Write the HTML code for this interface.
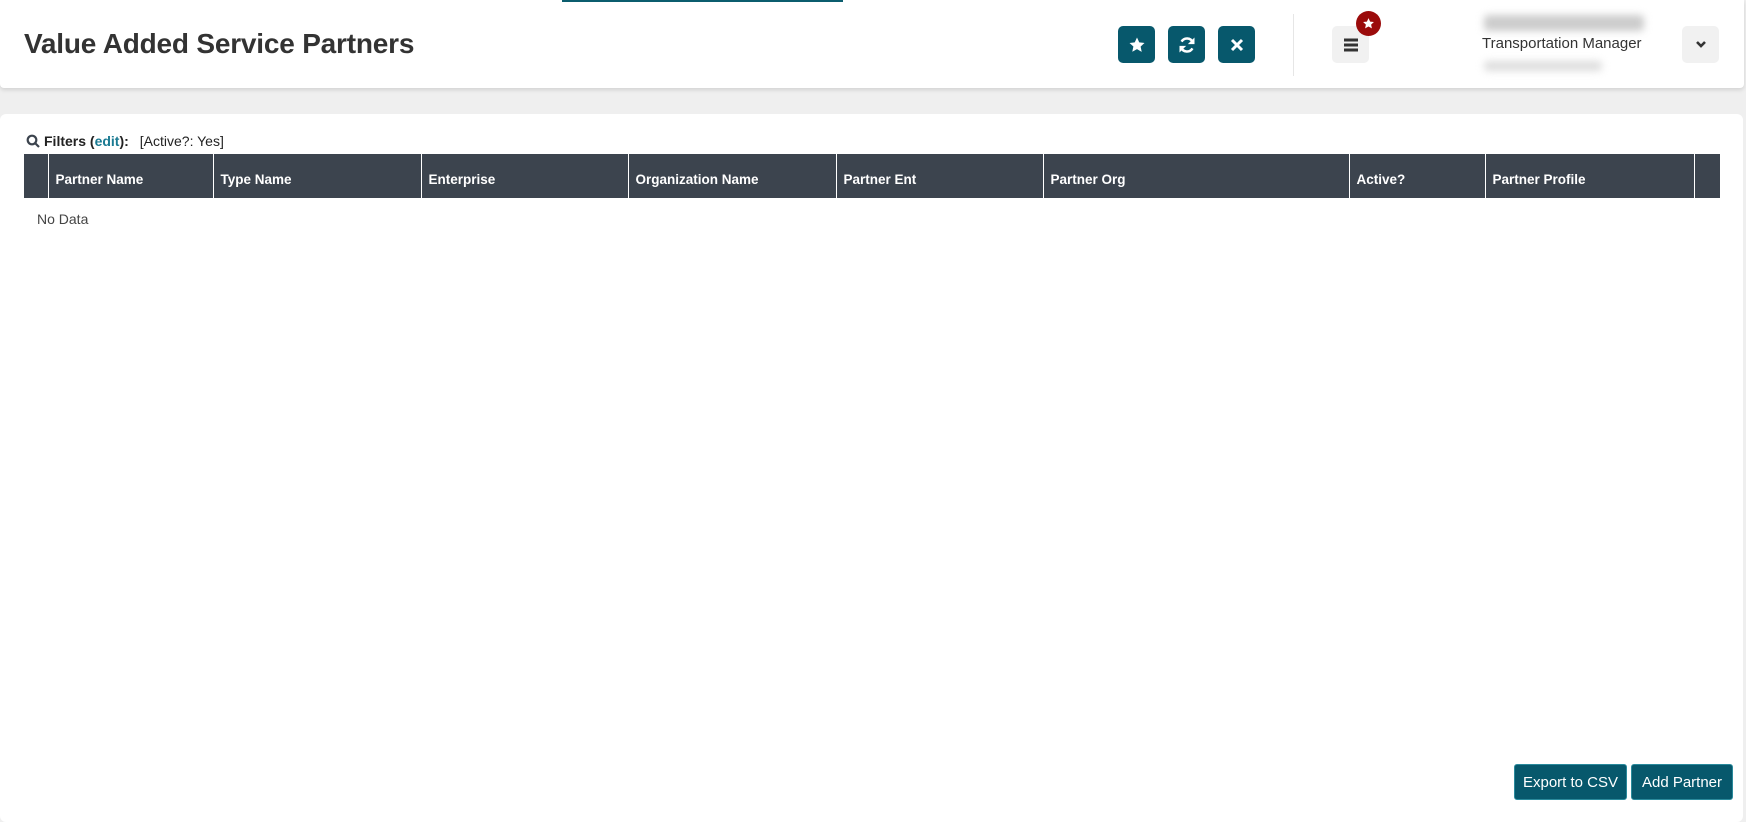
<!DOCTYPE html>
<html><head><style>
*{box-sizing:border-box;margin:0;padding:0}
body{width:1746px;height:822px;background:#efefef;font-family:"Liberation Sans",sans-serif;position:relative;overflow:hidden;color:#333}
.hdr{position:absolute;left:0;top:0;width:1744px;height:88px;background:#fff;box-shadow:0 2px 4px rgba(0,0,0,.12);border-radius:0 0 4px 4px}
.tl{position:absolute;left:562px;top:0;width:281px;height:2px;background:#0b5d6e}
h1{position:absolute;left:24px;top:28px;font-size:28px;font-weight:bold;color:#333;letter-spacing:-.2px}
.ib{position:absolute;top:26px;width:37px;height:37px;border-radius:5px;background:#07586c;display:flex;align-items:center;justify-content:center}
.gb{position:absolute;top:26px;width:37px;height:37px;border-radius:5px;background:#f1f1f1;display:flex;align-items:center;justify-content:center}
.panel{position:absolute;left:0;top:114px;width:1743px;height:708px;background:#fff;border-radius:6px}
.blur{position:absolute;background:#ccc;filter:blur(4px);border-radius:4px}
table{position:absolute;left:24px;top:154px;width:1696px;border-collapse:collapse}
th{background:#3c444e;color:#fff;font-size:13.5px;text-align:left;height:44px;padding:6px 0 0 7px;border-left:1px solid #fff}
th:first-child{border-left:none}
.btn{position:absolute;top:764px;height:36px;background:#07586c;color:#fff;font-size:15px;border-radius:3px;display:flex;align-items:center;justify-content:center;border:1px solid #2a8a9c}
</style></head><body>
<div class="hdr">
<div class="tl"></div>
<h1>Value Added Service Partners</h1>
<div class="ib" style="left:1118px"><svg width="18" height="18" viewBox="0 0 24 24"><path fill="#fff" d="M12 2l3 6.5 7 .8-5.2 4.8 1.5 7L12 17.5 5.7 21l1.5-7L2 9.3l7-.8z"/></svg></div>
<div class="ib" style="left:1168px"><svg width="20" height="20" viewBox="0 0 24 24" fill="none" stroke="#fff" stroke-width="3"><path d="M19 9A7.5 7.5 0 0 0 5.5 8M5 15a7.5 7.5 0 0 0 13.5 1"/><path fill="#fff" stroke="none" d="M21 3v8h-8zM3 21v-8h8z"/></svg></div>
<div class="ib" style="left:1218px"><svg width="14" height="14" viewBox="0 0 14 14" stroke="#fff" stroke-width="3"><path d="M2 2l10 10M12 2L2 12"/></svg></div>
<div style="position:absolute;left:1293px;top:14px;width:1px;height:62px;background:#e6e6e6"></div>
<div class="gb" style="left:1332px"><svg width="16" height="14" viewBox="0 0 16 14" stroke="#333" stroke-width="3"><path d="M1 2h14M1 7h14M1 12h14"/></svg></div>
<div style="position:absolute;left:1356px;top:11px;width:25px;height:25px;border-radius:50%;background:#9b0b0b;display:flex;align-items:center;justify-content:center"><svg width="13" height="13" viewBox="0 0 24 24"><path fill="#fff" d="M12 2l3 6.5 7 .8-5.2 4.8 1.5 7L12 17.5 5.7 21l1.5-7L2 9.3l7-.8z"/></svg></div>
<div class="blur" style="left:1484px;top:15px;width:160px;height:16px"></div>
<div style="position:absolute;left:1482px;top:35px;font-size:15px;color:#333">Transportation Manager</div>
<div class="blur" style="left:1484px;top:61px;width:118px;height:10px;background:#ddd"></div>
<div class="gb" style="left:1682px"><svg width="12" height="9" viewBox="0 0 12 9" fill="none" stroke="#333" stroke-width="2.6"><path d="M2 2l4 4 4-4"/></svg></div>
</div>
<div class="panel"></div>
<div style="position:absolute;left:26px;top:133px;font-size:14px;color:#222;display:flex;align-items:center">
<svg width="14" height="14" viewBox="0 0 14 14" fill="none" stroke="#3c444e" stroke-width="2.2"><circle cx="6" cy="6" r="4.3"/><path d="M9 9l4 4"/></svg>
<b style="margin-left:4px">Filters (<span style="color:#1a7a92">edit</span>):</b><span style="margin-left:11px">[Active?: Yes]</span></div>
<table><tr>
<th style="width:24px;padding:0"></th><th style="width:165px">Partner Name</th><th style="width:208px">Type Name</th><th style="width:207px">Enterprise</th><th style="width:208px">Organization Name</th><th style="width:207px">Partner Ent</th><th style="width:306px">Partner Org</th><th style="width:136px">Active?</th><th style="width:209px">Partner Profile</th><th style="padding:0"></th>
</tr></table>
<div style="position:absolute;left:37px;top:211px;font-size:14px;color:#444">No Data</div>
<div class="btn" style="left:1514px;width:113px">Export to CSV</div>
<div class="btn" style="left:1631px;width:102px">Add Partner</div>
</body></html>
